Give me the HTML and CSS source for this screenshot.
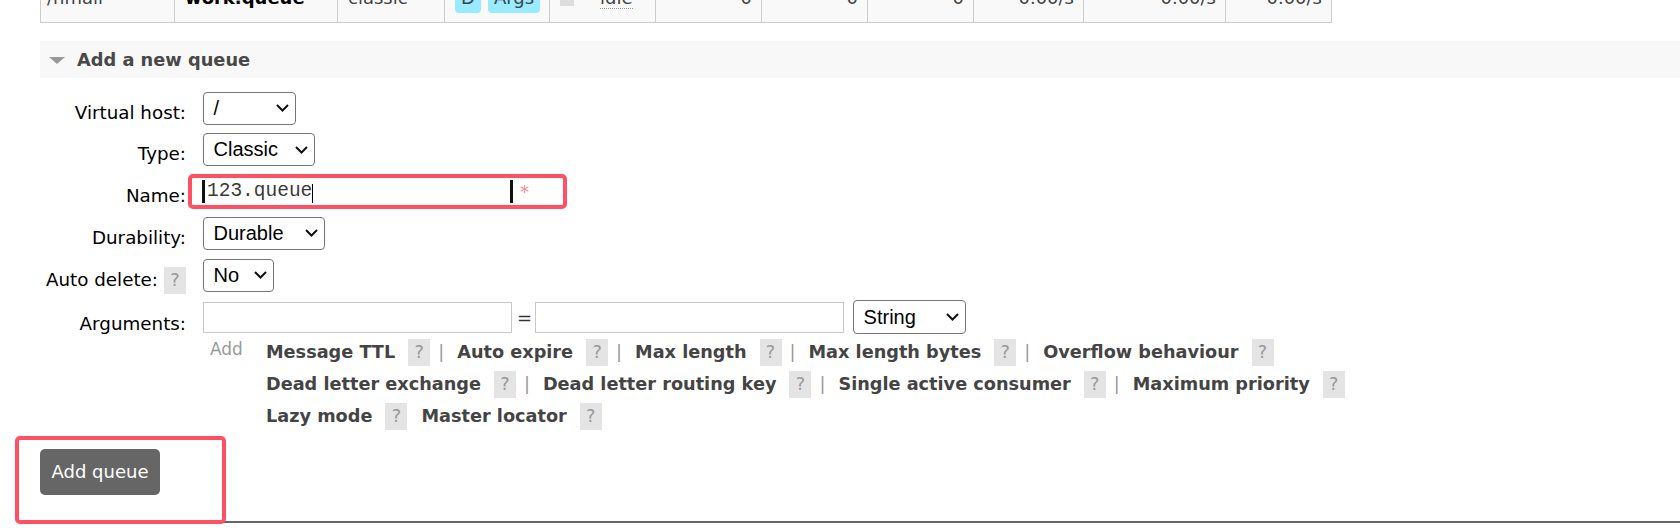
FILE: index.html
```html
<!DOCTYPE html>
<html lang="en">

<head>
  <meta charset="UTF-8">
  <meta name="viewport" content="width=device-width, initial-scale=1.0">
  <title>Queues</title>
  <link rel="stylesheet" href="styles.css">
</head>

<body>
  <table class="list">
    <colgroup>
      <col class="c-vhost"><col class="c-name"><col class="c-type"><col class="c-feat"><col class="c-state">
      <col class="c-n"><col class="c-n"><col class="c-n"><col class="c-rate1"><col class="c-rate2"><col class="c-n">
    </colgroup>
    <tr>
      <td class="vhost">/hmall</td>
      <td class="qname">work.queue</td>
      <td>classic</td>
      <td><abbr class="feat">D</abbr><abbr class="feat">Args</abbr></td>
      <td><span class="state"></span><abbr class="idle">idle</abbr></td>
      <td class="num">0</td>
      <td class="num">0</td>
      <td class="num">0</td>
      <td class="num">0.00/s</td>
      <td class="num">0.00/s</td>
      <td class="num">0.00/s</td>
    </tr>
  </table>

  <div class="section">
    <h2 class="section-head"><span class="arrow"></span>Add a new queue</h2>

    <form class="queue-form">
      <label class="lbl">Virtual host:</label>
      <div class="field">
        <span class="select sel-vhost"><span>/</span><svg width="13" height="8" viewBox="0 0 13 8"><path d="M1 1l5.5 5.5L12 1" fill="none" stroke="#111" stroke-width="2"/></svg></span>
      </div>

      <label class="lbl">Type:</label>
      <div class="field">
        <span class="select sel-type"><span>Classic</span><svg width="13" height="8" viewBox="0 0 13 8"><path d="M1 1l5.5 5.5L12 1" fill="none" stroke="#111" stroke-width="2"/></svg></span>
      </div>

      <label class="lbl">Name:</label>
      <div class="field name-field">
        <div class="name-input"><span>123.queue</span><span class="caret"></span></div>
        <span class="mand">*</span>
        <span class="mark mark-name"></span>
      </div>

      <label class="lbl">Durability:</label>
      <div class="field">
        <span class="select sel-dur"><span>Durable</span><svg width="13" height="8" viewBox="0 0 13 8"><path d="M1 1l5.5 5.5L12 1" fill="none" stroke="#111" stroke-width="2"/></svg></span>
      </div>

      <label class="lbl">Auto delete:<span class="help">?</span></label>
      <div class="field">
        <span class="select sel-auto"><span>No</span><svg width="13" height="8" viewBox="0 0 13 8"><path d="M1 1l5.5 5.5L12 1" fill="none" stroke="#111" stroke-width="2"/></svg></span>
      </div>

      <label class="lbl lbl-args">Arguments:</label>
      <div class="args">
        <div class="arg-line">
          <input class="text-in" type="text">
          <span class="eq">=</span>
          <input class="text-in" type="text">
          <span class="select sel-kind"><span>String</span><svg width="13" height="8" viewBox="0 0 13 8"><path d="M1 1l5.5 5.5L12 1" fill="none" stroke="#111" stroke-width="2"/></svg></span>
        </div>
        <div class="arg-help">
          <div class="arg-add">Add</div>
          <div class="arg-links">
            <div>
              <span class="arg">Message TTL</span><span class="help">?</span><span class="sep">|</span><span class="arg">Auto expire</span><span class="help">?</span><span class="sep">|</span><span class="arg">Max length</span><span class="help">?</span><span class="sep">|</span><span class="arg">Max length bytes</span><span class="help">?</span><span class="sep">|</span><span class="arg">Overflow behaviour</span><span class="help">?</span>
            </div>
            <div>
              <span class="arg">Dead letter exchange</span><span class="help">?</span><span class="sep">|</span><span class="arg">Dead letter routing key</span><span class="help">?</span><span class="sep">|</span><span class="arg">Single active consumer</span><span class="help">?</span><span class="sep">|</span><span class="arg">Maximum priority</span><span class="help">?</span>
            </div>
            <div>
              <span class="arg">Lazy mode</span><span class="help">?</span><span class="arg">Master locator</span><span class="help">?</span>
            </div>
          </div>
        </div>
      </div>
    </form>

    <div class="submit">
      <button class="add-btn" type="button">Add queue</button>
      <span class="mark mark-submit"></span>
    </div>
  </div>
</body>

</html>
```

FILE: styles.css
```css
html,
body {
  width: 100%;
  height: 100%;
  overflow: hidden;
}

body {
  margin: 0;
  background: #fff;
  color: #000;
  font-family: 'DejaVu Sans', Verdana, sans-serif;
  font-size: 18px;
}

/* queue list (scrolled, only the last row shows) */
.list {
  border-collapse: collapse;
  table-layout: fixed;
  width: 1292px;
  margin: -13px 0 0 40px;
}

.c-vhost { width: 134px; }
.c-name { width: 163px; }
.c-type { width: 107px; }
.c-feat { width: 105px; }
.c-state { width: 106px; }
.c-n { width: 106px; }
.c-rate1 { width: 110px; }
.c-rate2 { width: 142px; }

.list td {
  height: 35px;
  padding: 0 9px 0 10px;
  border: 1px solid #ccc;
  border-top: none;
  background: #f9f9f9;
  color: #444;
  line-height: 22px;
  vertical-align: top;
  white-space: nowrap;
  overflow: hidden;
}

.list td.vhost {
  padding-left: 6px;
}

.list td.qname {
  color: #000;
  font-weight: bold;
}

.list td.num {
  text-align: right;
}

.feat {
  display: inline-block;
  padding: 0 6px 4px;
  margin-right: 7px;
  border-radius: 4px;
  background: #99ebff;
  color: #444;
  text-decoration: none;
}

.state {
  display: inline-block;
  width: 14px;
  height: 14px;
  margin-right: 26px;
  background: #ddd;
  vertical-align: -1.5px;
}

.idle {
  text-decoration: none;
  border-bottom: 1px dotted #999;
}

/* add queue section */
.section {
  margin: 18px 0 0 40px;
  padding-bottom: 26px;
  border-bottom: 2px solid #666;
}

.section-head {
  display: flex;
  align-items: center;
  height: 37px;
  margin: 0;
  padding-left: 9px;
  background: #f8f8f8;
  color: #484848;
  font-size: 17.8px;
  font-weight: bold;
}

.arrow {
  width: 0;
  height: 0;
  margin: 1px 12px 0 0;
  border-left: 8.5px solid transparent;
  border-right: 8.5px solid transparent;
  border-top: 7.5px solid #999;
}

.queue-form {
  display: grid;
  grid-template-columns: 146px auto;
  column-gap: 17px;
  row-gap: 8.8px;
  padding-top: 13.5px;
  justify-items: start;
}

.lbl {
  justify-self: end;
  height: 33px;
  box-sizing: border-box;
  padding-top: 8px;
  font-size: 18.3px;
  line-height: 25px;
  white-space: nowrap;
}

.lbl-args {
  height: auto;
  padding-top: 10.5px;
}

.lbl .help {
  margin-left: 6px;
}

.field {
  display: flex;
  align-items: center;
  height: 33px;
}

.select {
  display: inline-flex;
  align-items: center;
  justify-content: space-between;
  box-sizing: border-box;
  height: 33px;
  padding: 0 6.5px 0 9.5px;
  border: 1px solid #767676;
  border-radius: 4px;
  background: #fff;
  color: #000;
  font-family: 'Liberation Sans', Arial, sans-serif;
  font-size: 20px;
}

.sel-vhost { width: 93px; }
.sel-type { width: 112px; }
.sel-dur { width: 122px; }
.sel-auto { width: 71px; }

.sel-kind {
  width: 113px;
  height: 34px;
  margin-left: 9px;
}

.name-field {
  position: relative;
}

.name-input {
  display: flex;
  align-items: center;
  box-sizing: border-box;
  width: 311px;
  height: 23px;
  margin-left: -1px;
  padding-left: 2px;
  border-left: 3px solid #111;
  border-right: 3px solid #111;
  color: #3a3a3a;
  font-family: 'Liberation Mono', 'Courier New', monospace;
  font-size: 19.5px;
  line-height: 23px;
}

.caret {
  align-self: flex-end;
  width: 0;
  height: 19px;
  border-left: 1px solid #000;
}

.mand {
  margin-left: 7px;
  color: #f88;
  line-height: 23px;
}

.arg-line {
  display: flex;
  align-items: center;
}

.text-in {
  box-sizing: border-box;
  width: 309px;
  height: 31px;
  margin: 0;
  padding: 0 4px;
  border: 1px solid #c8c8c8;
  background: #fff;
}

.eq {
  margin: 0 3px 0 5px;
  color: #333;
}

.arg-help {
  display: flex;
  margin-top: 1.5px;
}

.arg-add {
  box-sizing: border-box;
  width: 63px;
  padding-left: 7px;
  color: #999;
  font-size: 17px;
  line-height: 26px;
}

.arg-links {
  color: #444;
  font-size: 17.7px;
  font-weight: bold;
  line-height: 32px;
  white-space: nowrap;
}

.help {
  display: inline-block;
  width: 22px;
  height: 27px;
  margin-left: 13px;
  background: #e4e4e4;
  color: #999;
  font-size: 17.7px;
  font-weight: normal;
  line-height: 27px;
  text-align: center;
}

.sep {
  margin: 0 13px 0 8px;
  color: #999;
  font-weight: normal;
}

.help + .arg {
  margin-left: 14px;
}

.submit {
  position: relative;
  margin-top: 17px;
}

.add-btn {
  display: block;
  width: 120px;
  height: 46px;
  padding: 0;
  border: none;
  border-radius: 5px;
  background: #666;
  color: #fff;
  font-family: inherit;
  font-size: 18px;
}

/* red annotation frames drawn over the screenshot */
.mark {
  position: absolute;
  box-sizing: border-box;
  border: 4px solid #ff5064;
  border-radius: 5px;
  pointer-events: none;
}

.mark-name {
  top: -1px;
  left: -15px;
  width: 379px;
  height: 35px;
}

.mark-submit {
  top: -13.3px;
  left: -25.5px;
  width: 211px;
  height: 88px;
}
```
